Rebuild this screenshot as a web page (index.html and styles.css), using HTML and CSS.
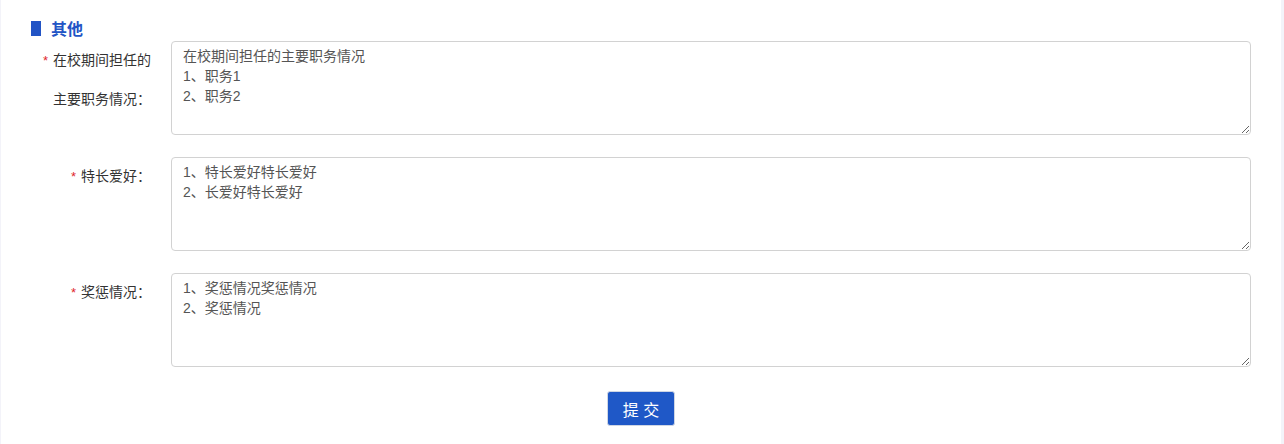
FILE: index.html
```html
<!DOCTYPE html>
<html>
<head>
<meta charset="utf-8" />
<title>其他</title>
<link rel="stylesheet" href="styles.css">
</head>
<body>
	<div class="page">
		<h3 class="title"><i class="bar"></i>其他</h3>
		<form class="form">
			<div class="row">
				<label class="lbl"><i class="req">*</i><span class="txt">在校期间担任的主要职务情况：</span></label>
				<textarea class="ta">在校期间担任的主要职务情况
1、职务1
2、职务2</textarea>
			</div>
			<div class="row">
				<label class="lbl"><i class="req">*</i><span class="txt">特长爱好：</span></label>
				<textarea class="ta">1、特长爱好特长爱好
2、长爱好特长爱好</textarea>
			</div>
			<div class="row">
				<label class="lbl"><i class="req">*</i><span class="txt">奖惩情况：</span></label>
				<textarea class="ta">1、奖惩情况奖惩情况
2、奖惩情况</textarea>
			</div>
			<div class="btns"><button type="button" class="btn">提 交</button></div>
		</form>
	</div>
</body>
</html>
```

FILE: styles.css
```css
*{margin:0; padding:0; box-sizing:border-box;}
html,body{height:100%; overflow:hidden;}
body{background:#f3f3f9; font-family:"Liberation Sans", Arial, "Noto Sans CJK SC", sans-serif; font-size:14px; color:#333;}
.page{background:#fff; margin:0 3px 0 1px; height:444px; padding:18px 30px 0 30px;}
.title{display:flex; align-items:center; height:20px; margin-bottom:3px; font-size:16px; font-weight:bold; color:#2254c5;}
.bar{display:block; width:10px; height:15px; background:#2254c5; margin-right:10px;}
.row{display:flex; margin-bottom:22px;}
.lbl{display:flex; justify-content:flex-end; align-items:flex-start; width:120px; margin-right:20px; font-size:14px; color:#333;}
.req{font-style:normal; color:#e0262b; line-height:39px; margin-right:5px; font-size:13px;}
.txt{max-width:98px; line-height:39px;}
.ta{display:block; flex:1; height:94px; border:1px solid #d2d2d2; border-radius:4px; padding:4px 11px; font-family:"Liberation Sans", Arial, "Noto Sans CJK SC", sans-serif; font-size:14px; line-height:20px; color:#555; background:#fff; resize:vertical; outline:none;}
.btns{display:flex; justify-content:center; padding-top:2px;}
.btn{width:68px; height:35px; background:#1f58c7; border:1px solid #cfd6e4; border-radius:3px; color:#fff; font-family:"Liberation Sans", Arial, "Noto Sans CJK SC", sans-serif; font-size:16px; cursor:pointer;}
```
